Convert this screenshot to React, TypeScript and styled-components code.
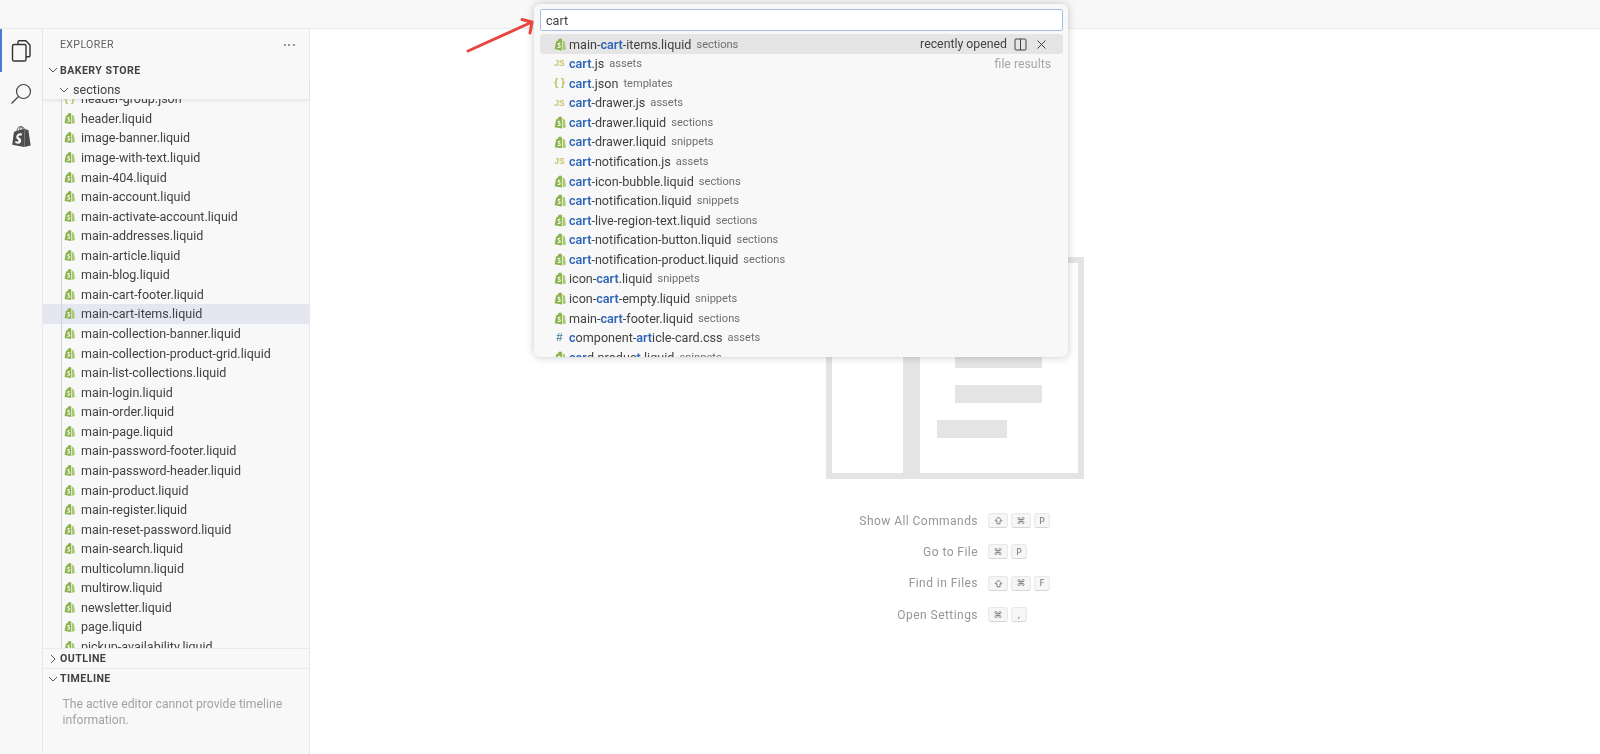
import React from "react";
import styled, { createGlobalStyle } from "styled-components";
import { SiShopify } from "react-icons/si";

const Global = createGlobalStyle`
  html, body { margin: 0; height: 100%; overflow: hidden; background: #fff; }
  * { box-sizing: border-box; }
`;

const Page = styled.div`
  position: relative;
  width: 1600px;
  height: 754px;
  display: flex;
  flex-direction: column;
  overflow: hidden;
  font-family: Roboto, "Noto Sans", sans-serif;
  color: #424242;
  background: #fff;
  filter: blur(0.35px);
`;
const TopBar = styled.header`
  flex: 0 0 29px;
  background: #f8f8f8;
  border-bottom: 1px solid #ebebeb;
`;
const Body = styled.div`
  flex: 1;
  min-height: 0;
  display: flex;
`;
const ActivityBar = styled.nav`
  flex: 0 0 43px;
  background: #f8f8f8;
  border-right: 1px solid #e8e8e8;
  display: flex;
  flex-direction: column;
`;
const ActivityItem = styled.div<{ $active?: boolean }>`
  height: 43px;
  display: flex;
  align-items: center;
  justify-content: center;
  border-left: 2px solid ${(p) => (p.$active ? "#4a7ccf" : "transparent")};
  padding-right: 2px;
`;
const Sidebar = styled.aside`
  flex: 0 0 267px;
  background: #f8f8f8;
  border-right: 1px solid #e8e8e8;
  display: flex;
  flex-direction: column;
  min-height: 0;
`;
const ExplorerHead = styled.div`
  flex: 0 0 31px;
  padding: 0 14px 0 17px;
  display: flex;
  align-items: center;
  justify-content: space-between;
  font-size: 10.6px;
  letter-spacing: 0.35px;
  color: #616161;
`;
const Dots = styled.span`
  display: flex;
  gap: 2.6px;
  i { width: 2px; height: 2px; border-radius: 50%; background: #757575; display: block; }
`;
const SectionHead = styled.div<{ $border?: boolean }>`
  flex: 0 0 20px;
  display: flex;
  align-items: center;
  gap: 1px;
  padding-left: 4px;
  font-size: 10.6px;
  font-weight: 700;
  letter-spacing: 0.45px;
  color: #424242;
  ${(p) => (p.$border ? "border-top: 1px solid #ebebeb;" : "")}
`;
const FolderRow = styled.div`
  flex: 0 0 19px;
  display: flex;
  align-items: center;
  gap: 3px;
  padding-left: 15px;
  font-size: 12.6px;
  color: #424242;
  position: relative;
  z-index: 1;
  box-shadow: 0 2px 3px rgba(0, 0, 0, 0.07);
`;
const Tree = styled.div`
  flex: 1;
  min-height: 0;
  overflow: hidden;
  position: relative;
`;
const TreeList = styled.ul`
  list-style: none;
  margin: -10px 0 0;
  padding: 0;
`;
const TreeRow = styled.li<{ $selected?: boolean }>`
  height: 19.57px;
  display: flex;
  align-items: center;
  gap: 6px;
  padding-left: 21px;
  font-size: 12.5px;
  color: #424242;
  position: relative;
  background: ${(p) => (p.$selected ? "#e4e6f1" : "transparent")};
  &::before {
    content: "";
    position: absolute;
    left: 18px;
    top: 0;
    bottom: 0;
    width: 1px;
    background: #d2d2d2;
  }
`;
const TimelineMsg = styled.p`
  margin: 0;
  padding: 8px 5px 0 19.5px;
  font-size: 12.2px;
  line-height: 16px;
  color: #a3a3a3;
  flex: 0 0 66px;
`;
const Editor = styled.main`
  flex: 1;
  min-width: 0;
  background: #fff;
  display: flex;
  flex-direction: column;
  align-items: center;
  padding-top: 228px;
`;
const Shortcuts = styled.dl`
  margin: 26px 0 0;
  display: grid;
  grid-template-columns: 240px 184px;
  column-gap: 10px;
  grid-auto-rows: 31.3px;
  align-items: center;
`;
const ShortcutLabel = styled.dt`
  text-align: right;
  font-size: 12px;
  letter-spacing: 0.45px;
  color: #969696;
`;
const ShortcutKeys = styled.dd`
  margin: 0;
  display: flex;
  gap: 3px;
`;
const Key = styled.kbd<{ $wide?: boolean }>`
  width: ${(p) => (p.$wide ? 20 : 16)}px;
  height: 15px;
  display: flex;
  align-items: center;
  justify-content: center;
  background: #f6f6f6;
  border: 1px solid #e8e8e8;
  border-bottom-color: #d6d6d6;
  border-radius: 3px;
  font-family: "DejaVu Sans", Roboto, sans-serif;
  font-size: 9px;
  color: #777;
`;
const Quick = styled.section`
  position: absolute;
  left: 534px;
  top: 4px;
  width: 534px;
  height: 353px;
  background: #f8f8f8;
  border-radius: 6px;
  box-shadow: 0 0 8px rgba(0, 0, 0, 0.22);
  padding: 5px 5px 0 6px;
  display: flex;
  flex-direction: column;
`;
const QuickInput = styled.input`
  flex: 0 0 22px;
  width: 100%;
  border: 1px solid #a3bfe6;
  border-radius: 2px;
  background: #fff;
  padding: 0 5px;
  font: 12.6px Roboto, "Noto Sans", sans-serif;
  color: #424242;
  outline: none;
`;
const QuickList = styled.ul`
  list-style: none;
  margin: 3.4px 0 0;
  padding: 0;
  flex: 1;
  min-height: 0;
  overflow: hidden;
`;
const QuickRow = styled.li<{ $active?: boolean }>`
  height: 19.57px;
  display: flex;
  align-items: center;
  padding: 0 12px 0 13px;
  border-radius: 3px;
  font-size: 12.6px;
  color: #424242;
  background: ${(p) => (p.$active ? "#e5e5e5" : "transparent")};
`;
const IconSlot = styled.span`
  flex: 0 0 13px;
  width: 13px;
  display: flex;
  align-items: center;
  justify-content: center;
  margin-right: 3px;
`;
const TreeIconSlot = styled(IconSlot)`
  flex: 0 0 11px;
  width: 11px;
  margin-right: 0;
  z-index: 1;
`;
const TextIcon = styled.span<{ $color: string; $size: number }>`
  color: ${(p) => p.$color};
  font-size: ${(p) => p.$size}px;
  font-weight: 700;
  line-height: 1;
  font-family: "Liberation Sans", sans-serif;
  white-space: nowrap;
`;
const Mark = styled.b`
  font-weight: 600;
  color: #2f66b8;
`;
const Desc = styled.span`
  margin-left: 5px;
  font-size: 11.1px;
  color: #6f6f6f;
`;
const RowEnd = styled.span<{ $muted?: boolean }>`
  margin-left: auto;
  display: flex;
  align-items: center;
  gap: 7px;
  font-size: 12.3px;
  color: ${(p) => (p.$muted ? "#a3a8ae" : "#424242")};
`;
const EndIcons = styled.span`
  display: flex;
  align-items: center;
  gap: 8px;
  margin-right: 3px;
`;
const ArrowOverlay = styled.svg`
  position: absolute;
  left: 460px;
  top: 14px;
  pointer-events: none;
`;

const LiquidIcon = ({ size }: { size: number }) => (
  <svg width={size} height={size * 1.08} viewBox="0 0 12 13">
    <path fill="#8cb44c" d="M.6 11.4 2.1 3.6l1.5-.5C4 1.6 5 .5 6.2.5c.5 0 1 .2 1.3.5l.4.3v11.2z" />
    <path fill="#a9c872" d="M8.7 1.8l.9 1.4 1.3.2 1 8.1-3.2.8z" />
    <path fill="none" stroke="#f8f8f8" strokeWidth="1.15" d="M6.3 5.6c-1-.5-2.1-.2-2.1.7 0 1 2 1 2 2.2 0 1.1-1.5 1.3-2.6.7" />
  </svg>
);

const FileIcon = ({ name, tree }: { name: string; tree?: boolean }) => {
  const Slot = tree ? TreeIconSlot : IconSlot;
  if (name.endsWith(".liquid")) return <Slot><LiquidIcon size={12} /></Slot>;
  if (name.endsWith(".js")) return <Slot><TextIcon $color="#c9c36a" $size={8.5}>JS</TextIcon></Slot>;
  if (name.endsWith(".css")) return <Slot><TextIcon $color="#5f8fa8" $size={11.5}>#</TextIcon></Slot>;
  return <Slot><TextIcon $color="#b9bd5b" $size={10}>{"{ }"}</TextIcon></Slot>;
};

const Highlight = ({ text }: { text: string }) => (
  <span>
    {text.split(/(\[[^\]]*\])/).filter(Boolean).map((s, i) =>
      s.startsWith("[") ? <Mark key={i}>{s.slice(1, -1)}</Mark> : <span key={i}>{s}</span>
    )}
  </span>
);

const Chevron = ({ open }: { open: boolean }) => (
  <svg width="12" height="12" viewBox="0 0 12 12" fill="none" stroke="#424242" strokeWidth="0.9">
    {open ? <path d="M2 4l4 4 4-4" /> : <path d="M4 2l4 4-4 4" />}
  </svg>
);

const ShiftGlyph = () => (
  <svg width="9" height="9" viewBox="0 0 9 9" fill="none" stroke="#777" strokeWidth="0.9" strokeLinejoin="round">
    <path d="M4.5 1 8 4.8H6v3H3v-3H1z" />
  </svg>
);

const treeFiles = [
  "header-group.json", "header.liquid", "image-banner.liquid", "image-with-text.liquid", "main-404.liquid",
  "main-account.liquid", "main-activate-account.liquid", "main-addresses.liquid", "main-article.liquid",
  "main-blog.liquid", "main-cart-footer.liquid", "main-cart-items.liquid", "main-collection-banner.liquid",
  "main-collection-product-grid.liquid", "main-list-collections.liquid", "main-login.liquid", "main-order.liquid",
  "main-page.liquid", "main-password-footer.liquid", "main-password-header.liquid", "main-product.liquid",
  "main-register.liquid", "main-reset-password.liquid", "main-search.liquid", "multicolumn.liquid",
  "multirow.liquid", "newsletter.liquid", "page.liquid", "pickup-availability.liquid",
];

const results: [string, string][] = [
  ["main-[cart]-items.liquid", "sections"],
  ["[cart].js", "assets"],
  ["[cart].json", "templates"],
  ["[cart]-drawer.js", "assets"],
  ["[cart]-drawer.liquid", "sections"],
  ["[cart]-drawer.liquid", "snippets"],
  ["[cart]-notification.js", "assets"],
  ["[cart]-icon-bubble.liquid", "sections"],
  ["[cart]-notification.liquid", "snippets"],
  ["[cart]-live-region-text.liquid", "sections"],
  ["[cart]-notification-button.liquid", "sections"],
  ["[cart]-notification-product.liquid", "sections"],
  ["icon-[cart].liquid", "snippets"],
  ["icon-[cart]-empty.liquid", "snippets"],
  ["main-[cart]-footer.liquid", "sections"],
  ["[c]omponent-[art]icle-card.css", "assets"],
  ["[car]d-produc[t].liquid", "snippets"],
];

const shortcuts: [string, string[]][] = [
  ["Show All Commands", ["⇧", "⌘", "P"]],
  ["Go to File", ["⌘", "P"]],
  ["Find in Files", ["⇧", "⌘", "F"]],
  ["Open Settings", ["⌘", ","]],
];

export default function App() {
  return (
    <Page>
      <Global />
      <TopBar />
      <Body>
        <ActivityBar>
          <ActivityItem $active>
            <svg width="22" height="24" viewBox="0 0 22 24" fill="none" stroke="#333" strokeWidth="1.4" strokeLinejoin="round">
              <path d="M8 5.5V3A1.2 1.2 0 0 1 9.2 1.8h6.6l4.2 4.2v10.6a1.2 1.2 0 0 1-1.2 1.2H16" />
              <rect x="2.5" y="5.5" width="13.5" height="16.5" rx="1.6" />
            </svg>
          </ActivityItem>
          <ActivityItem>
            <svg width="22" height="22" viewBox="0 0 22 22" fill="none" stroke="#424242" strokeWidth="1.2">
              <circle cx="13.5" cy="8.5" r="7" />
              <path d="M8.5 13.5L1.5 20.5" />
            </svg>
          </ActivityItem>
          <ActivityItem>
            <SiShopify size={21} color="#4d4d4d" />
          </ActivityItem>
        </ActivityBar>
        <Sidebar>
          <ExplorerHead>
            <span>EXPLORER</span>
            <Dots><i /><i /><i /></Dots>
          </ExplorerHead>
          <SectionHead><Chevron open /><span>BAKERY STORE</span></SectionHead>
          <FolderRow><Chevron open /><span>sections</span></FolderRow>
          <Tree>
            <TreeList>
              {treeFiles.map((f) => (
                <TreeRow key={f} $selected={f === "main-cart-items.liquid"}>
                  <FileIcon name={f} tree />
                  <span>{f}</span>
                </TreeRow>
              ))}
            </TreeList>
          </Tree>
          <SectionHead $border><Chevron open={false} /><span>OUTLINE</span></SectionHead>
          <SectionHead $border><Chevron open /><span>TIMELINE</span></SectionHead>
          <TimelineMsg>The active editor cannot provide timeline information.</TimelineMsg>
        </Sidebar>
        <Editor>
          <svg width="258" height="222" viewBox="0 0 258 222" fill="#e4e4e4">
            <path fillRule="evenodd" d="M0 0h258v222H0zM6 6v210h71V6zM94 6v210h158V6z" />
            <rect x="129" y="95" width="87" height="16" />
            <rect x="129" y="128" width="87" height="18" />
            <rect x="111" y="163" width="70" height="18" />
          </svg>
          <Shortcuts>
            {shortcuts.map(([label, keys]) => (
              <React.Fragment key={label}>
                <ShortcutLabel>{label}</ShortcutLabel>
                <ShortcutKeys>
                  {keys.map((k) => (
                    <Key key={k} $wide={k === "⇧" || k === "⌘"}>{k === "⇧" ? <ShiftGlyph /> : k}</Key>
                  ))}
                </ShortcutKeys>
              </React.Fragment>
            ))}
          </Shortcuts>
        </Editor>
      </Body>
      <Quick>
        <QuickInput readOnly value="cart" />
        <QuickList>
          {results.map(([name, desc], i) => (
            <QuickRow key={name + desc} $active={i === 0}>
              <FileIcon name={name.replace(/[[\]]/g, "")} />
              <Highlight text={name} />
              <Desc>{desc}</Desc>
              {i === 0 && (
                <RowEnd>
                  <span>recently opened</span>
                  <EndIcons>
                    <svg width="13" height="13" viewBox="0 0 13 13" fill="none" stroke="#424242" strokeWidth="1">
                      <rect x="1" y="1" width="11" height="11" rx="1" />
                      <path d="M6.5 1v11" />
                    </svg>
                    <svg width="13" height="13" viewBox="0 0 13 13" fill="none" stroke="#424242" strokeWidth="1">
                      <path d="M2.5 2.5l8 8M10.5 2.5l-8 8" />
                    </svg>
                  </EndIcons>
                </RowEnd>
              )}
              {i === 1 && <RowEnd $muted>file results</RowEnd>}
            </QuickRow>
          ))}
        </QuickList>
      </Quick>
      <ArrowOverlay width="80" height="44" viewBox="0 0 80 44" fill="none" stroke="#e8463f" strokeWidth="3" strokeLinecap="round" strokeLinejoin="round">
        <path d="M8 37L72 8M62 5.5l10 2.5-2 11" />
      </ArrowOverlay>
    </Page>
  );
}
